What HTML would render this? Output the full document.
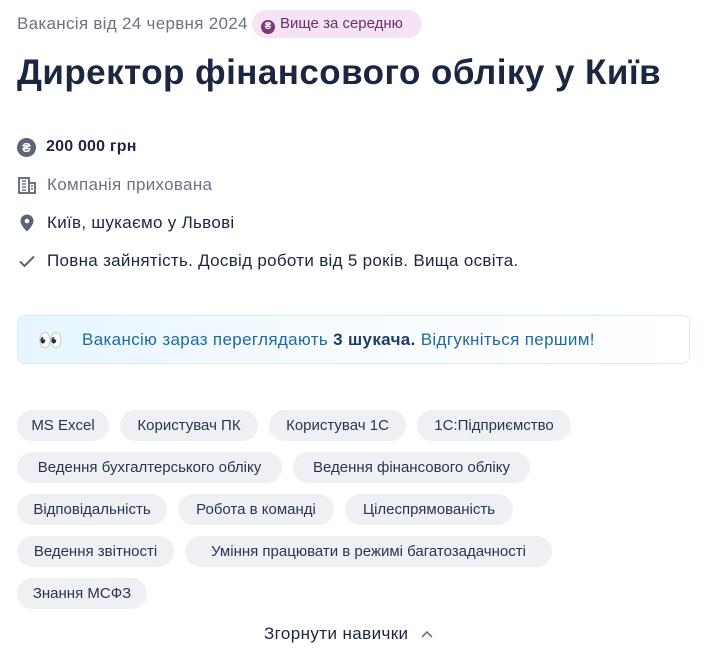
<!DOCTYPE html>
<html><head><meta charset="utf-8"><style>
*{margin:0;padding:0;box-sizing:border-box}
body{width:716px;height:666px;background:#fff;font-family:"Liberation Sans","DejaVu Sans",sans-serif;color:#1f2a44;position:relative;overflow:hidden}
.a{position:absolute;white-space:nowrap}
.tag{position:absolute;height:31px;border-radius:16px;background:#eff0f4;font-size:15px;line-height:31px;text-align:center;color:#2a3450;white-space:nowrap}
.row{position:absolute;left:17px;font-size:17px;letter-spacing:0.3px;line-height:20px;display:flex;align-items:center;white-space:nowrap}
.ic{width:20px;height:20px;margin-right:10px;display:inline-block;flex:none}
</style></head><body>
<div class="a" style="left:17px;top:14px;font-size:17px;letter-spacing:0.3px;color:#6b7285;line-height:20px">Вакансія від 24 червня 2024</div>
<div class="a" style="left:252px;top:10px;width:170px;height:28px;border-radius:14px;background:#f6e3f6;font-size:15px;line-height:28px;color:#6b2f6b;padding-left:9px">
<span style="display:inline-block;width:14px;height:14px;border-radius:50%;background:#7a3a7a;color:#fff;font-size:10px;line-height:14px;text-align:center;vertical-align:-1px;margin-right:5px;font-weight:bold">₴</span>Вище за середню</div>
<div class="a" style="left:17px;top:50px;font-size:35px;font-weight:bold;line-height:46px;color:#1b2640;letter-spacing:0.45px">Директор фінансового обліку у Київ</div>

<div class="row" style="top:137px;font-weight:bold;color:#1b2640;font-size:16px;letter-spacing:0.2px"><span class="ic" style="border-radius:50%;background:#5c6478;color:#fff;text-align:center;font-size:13px;line-height:19px;width:19px;height:19px;letter-spacing:0">₴</span>200 000 грн</div>
<div class="row" style="top:175px;color:#6b7285"><svg class="ic" viewBox="0 0 20 20"><rect x="2" y="3" width="10" height="15" fill="none" stroke="#6b7285" stroke-width="2"/><rect x="12" y="8" width="6" height="10" fill="none" stroke="#6b7285" stroke-width="2"/><path d="M5 6h4M5 9h4M5 12h4M5 15h4M14 11h2M14 14h2" stroke="#6b7285" stroke-width="1.5"/></svg>Компанія прихована</div>
<div class="row" style="top:213px;color:#1b2640"><svg class="ic" viewBox="0 0 20 20"><path d="M10 1.5a6.5 6.5 0 0 0-6.5 6.5c0 4.5 6.5 10.5 6.5 10.5s6.5-6 6.5-10.5A6.5 6.5 0 0 0 10 1.5z" fill="#5c6478"/><circle cx="10" cy="8" r="2.3" fill="#fff"/></svg>Київ, шукаємо у Львові</div>
<div class="row" style="top:251px;color:#1b2640"><svg class="ic" viewBox="0 0 20 20"><path d="M3 10.5l4.5 4.5L17 5.5" fill="none" stroke="#5c6478" stroke-width="2"/></svg>Повна зайнятість. Досвід роботи від 5 років. Вища освіта.</div>

<div class="a" style="left:17px;top:315px;width:673px;height:49px;border-radius:8px;border:1px solid #d7ecf7;background:linear-gradient(90deg,#e6f5fd,#f7fbfe 50%,#fff)">
<span class="a" style="left:20px;top:12px;font-size:20px">👀</span>
<span class="a" style="left:64px;top:14px;font-size:17px;letter-spacing:0.35px;color:#1e6aa0;line-height:20px">Вакансію зараз переглядають <b style="color:#1b3e66">3 шукача.</b> Відгукніться першим!</span>
</div>

<div class="tag" style="left:17px;top:410px;width:92px">MS Excel</div>
<div class="tag" style="left:120px;top:410px;width:138px">Користувач ПК</div>
<div class="tag" style="left:269px;top:410px;width:137px">Користувач 1С</div>
<div class="tag" style="left:417px;top:410px;width:154px">1С:Підприємство</div>
<div class="tag" style="left:17px;top:452px;width:265px">Ведення бухгалтерського обліку</div>
<div class="tag" style="left:293px;top:452px;width:237px">Ведення фінансового обліку</div>
<div class="tag" style="left:17px;top:494px;width:150px">Відповідальність</div>
<div class="tag" style="left:178px;top:494px;width:156px">Робота в команді</div>
<div class="tag" style="left:345px;top:494px;width:168px">Цілеспрямованість</div>
<div class="tag" style="left:17px;top:536px;width:157px">Ведення звітності</div>
<div class="tag" style="left:185px;top:536px;width:367px">Уміння працювати в режимі багатозадачності</div>
<div class="tag" style="left:17px;top:578px;width:130px">Знання МСФЗ</div>

<div class="a" style="left:264px;top:624px;font-size:17px;letter-spacing:0.4px;line-height:20px;color:#1b2640">Згорнути навички <svg width="14" height="10" viewBox="0 0 14 10" style="margin-left:6px"><path d="M2 8l5-5 5 5" fill="none" stroke="#6b7285" stroke-width="1.6"/></svg></div>
</body></html>
